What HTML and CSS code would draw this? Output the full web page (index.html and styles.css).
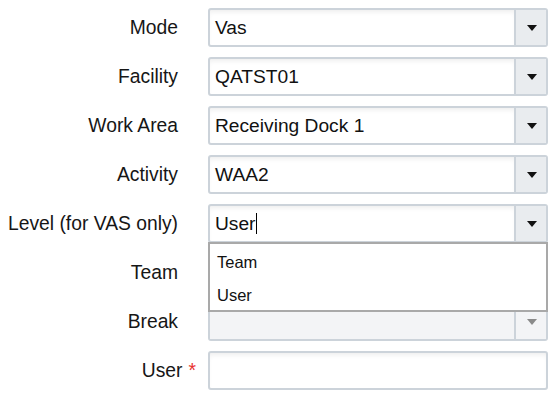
FILE: index.html
```html
<!DOCTYPE html>
<html>
<head>
<meta charset="utf-8">
<link rel="stylesheet" href="styles.css">
</head>
<body>
<form class="form">
  <label class="lbl">Mode</label>
  <div class="select"><div class="value">Vas</div><div class="btn"><span class="tri"></span></div></div>

  <label class="lbl">Facility</label>
  <div class="select"><div class="value">QATST01</div><div class="btn"><span class="tri"></span></div></div>

  <label class="lbl">Work Area</label>
  <div class="select"><div class="value">Receiving Dock 1</div><div class="btn"><span class="tri"></span></div></div>

  <label class="lbl">Activity</label>
  <div class="select"><div class="value">WAA2</div><div class="btn"><span class="tri"></span></div></div>

  <label class="lbl">Level (for VAS only)</label>
  <div class="field-wrap">
    <div class="select"><div class="value">User<span class="caret"></span></div><div class="btn"><span class="tri"></span></div></div>
    <ul class="menu">
      <li>Team</li>
      <li>User</li>
    </ul>
  </div>

  <label class="lbl">Team</label>
  <div class="select"><div class="value"></div><div class="btn"><span class="tri"></span></div></div>

  <label class="lbl">Break</label>
  <div class="select disabled"><div class="value"></div><div class="btn"><span class="tri"></span></div></div>

  <label class="lbl req">User <span class="star">*</span></label>
  <div class="input"></div>
</form>
</body>
</html>
```

FILE: styles.css
```css
html, body {
  margin: 0;
  padding: 0;
  background: #ffffff;
}

body {
  font-family: "Liberation Sans", Arial, sans-serif;
  color: #161616;
  width: 556px;
  height: 399px;
  overflow: hidden;
}

.form {
  display: grid;
  grid-template-columns: 196px 340px;
  grid-auto-rows: 39px;
  column-gap: 12px;
  row-gap: 10px;
  padding-top: 8px;
}

.lbl {
  display: flex;
  align-items: center;
  justify-content: flex-end;
  padding-right: 18px;
  font-size: 19.3px;
  white-space: nowrap;
}

.lbl.req {
  padding-right: 0;
}

.star {
  color: #e8312f;
  margin-left: 6px;
}

.field-wrap {
  position: relative;
}

.select,
.input {
  display: flex;
  height: 39px;
  box-sizing: border-box;
  border: 2px solid #ccd3da;
  border-radius: 3px;
  background: #ffffff;
  overflow: hidden;
}

.value {
  flex: 1;
  display: flex;
  align-items: center;
  padding-left: 5px;
  font-size: 19.2px;
  color: #111;
  box-shadow: inset 0 4px 5px -2px rgba(0, 0, 0, 0.07);
}

.input {
  box-shadow: inset 0 4px 5px -2px rgba(0, 0, 0, 0.07);
}

.caret {
  display: inline-block;
  width: 0;
  height: 21px;
  border-left: 1px solid #000;
}

.btn {
  width: 30px;
  border-left: 2px solid #ccd3da;
  background: #e9ecef;
  display: flex;
  align-items: center;
  justify-content: center;
}

.tri {
  width: 0;
  height: 0;
  border-left: 5px solid transparent;
  border-right: 5px solid transparent;
  border-top: 6px solid #111;
  margin-left: 1px;
}

.select.disabled .value {
  background: #f3f4f6;
  box-shadow: none;
}

.select.disabled .btn {
  background: #f3f4f6;
}

.select.disabled .tri {
  border-top-color: #8a8a8a;
}

.menu {
  position: absolute;
  top: 38px;
  left: 0;
  width: 340px;
  height: 70px;
  box-sizing: border-box;
  margin: 0;
  padding: 2px 0 0 0;
  list-style: none;
  background: #ffffff;
  border: 2px solid #a9a9a9;
  z-index: 2;
}

.menu li {
  height: 33px;
  display: flex;
  align-items: center;
  padding-left: 7px;
  font-size: 16.5px;
  color: #111;
}
```
